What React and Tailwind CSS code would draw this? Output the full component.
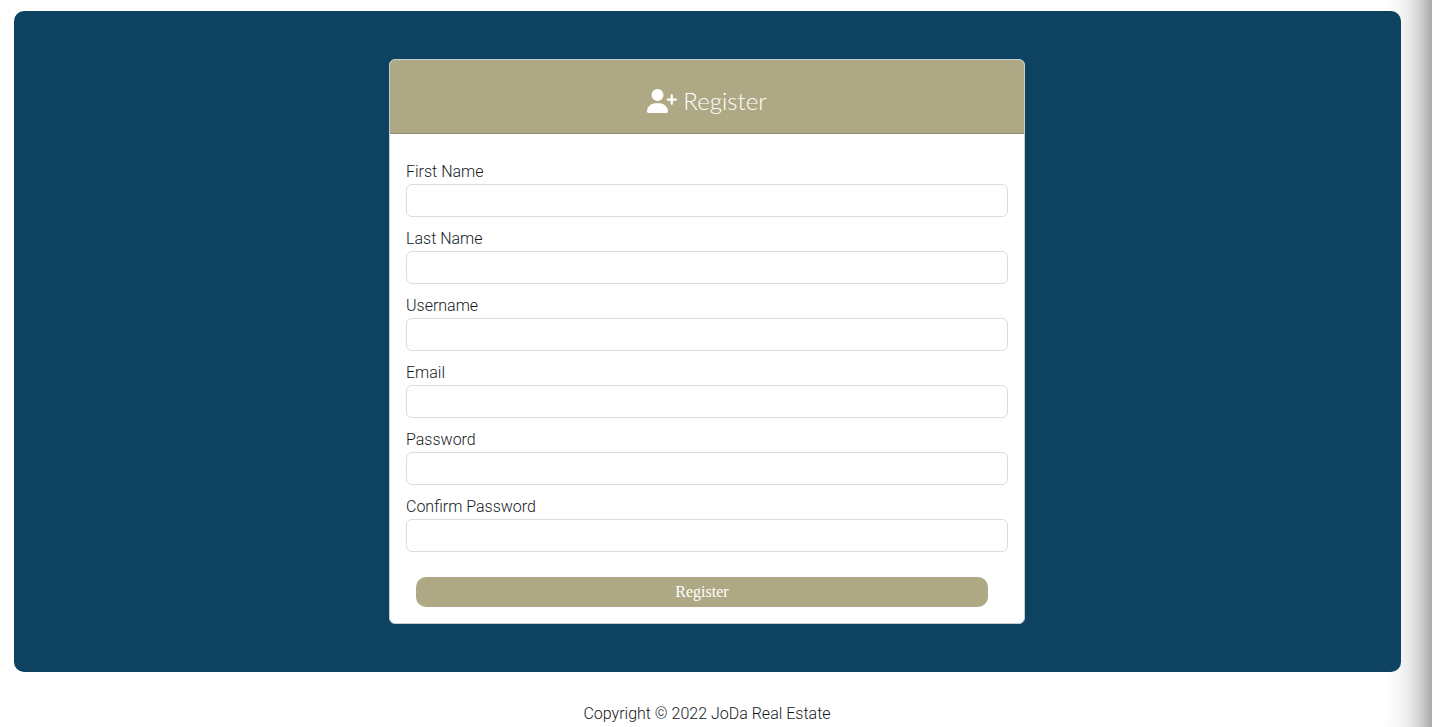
import { FaUserPlus } from "react-icons/fa6";

const fields = [
  { id: "first_name", label: "First Name", type: "text" },
  { id: "last_name", label: "Last Name", type: "text" },
  { id: "username", label: "Username", type: "text" },
  { id: "email", label: "Email", type: "email" },
  { id: "password", label: "Password", type: "password" },
  { id: "password2", label: "Confirm Password", type: "password" },
];

function Field({ id, label, type }) {
  return (
    <div className="mb-2.5 flex flex-col">
      <label htmlFor={id} className="leading-6">
        {label}
      </label>
      <input
        id={id}
        name={id}
        type={type}
        className="h-[33px] w-full rounded-md border border-[#d8dde2] bg-white px-3 outline-none focus:border-[#b0a985]"
      />
    </div>
  );
}

export default function App() {
  return (
    <div className="min-h-screen bg-[linear-gradient(to_left,#a8a8a8_0px,#c4c4c4_8px,#dcdcdc_16px,#ececec_24px,#f7f7f7_34px,#ffffff_48px)] pt-[11px] pr-[31px] pl-3.5 font-['Roboto',sans-serif] text-base font-light text-[#15191d]">
      <main className="rounded-[10px] bg-[#0d4260] py-12 pr-px">
        <section className="mx-auto w-full max-w-[636px] overflow-hidden rounded-md border border-[#c6cccf] bg-white">
          <header className="flex h-[74px] items-center justify-center gap-1.5 border-b border-[#8f8a6e] bg-[#aea884] pt-2 text-white">
            <FaUserPlus className="h-6 w-[30px]" aria-hidden="true" />
            <h1 className="font-['Lato',sans-serif] text-2xl font-light">Register</h1>
          </header>
          <form className="px-4 pt-[26px] pb-4" onSubmit={(e) => e.preventDefault()}>
            {fields.map((f) => (
              <Field key={f.id} {...f} />
            ))}
            <div className="flex pt-[15px] pr-5 pl-2.5">
              <button
                type="submit"
                className="h-[30px] w-full rounded-[10px] bg-[#aea884] font-['Liberation_Serif',serif] text-base font-normal text-white"
              >
                Register
              </button>
            </div>
          </form>
        </section>
      </main>
      <footer className="pt-[30px] pr-px text-center leading-6">Copyright © 2022 JoDa Real Estate</footer>
    </div>
  );
}
